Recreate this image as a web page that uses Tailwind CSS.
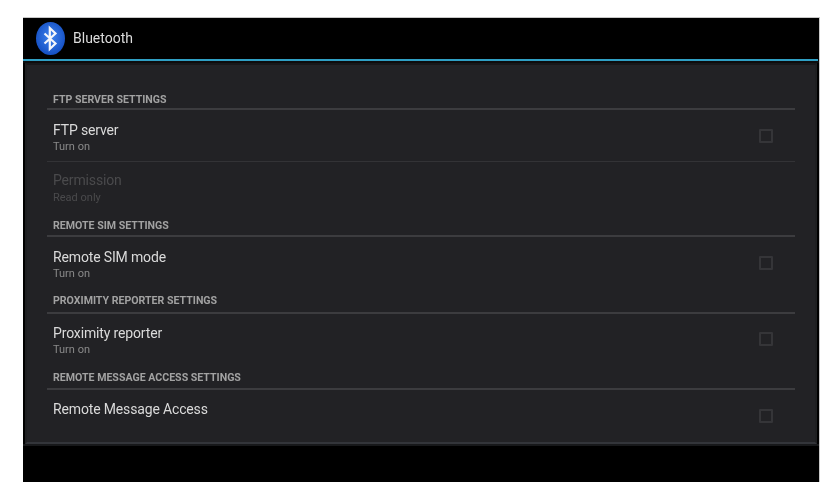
<!DOCTYPE html>
<html lang="en">
<head>
<meta charset="UTF-8">
<title>Bluetooth</title>
<script src="https://cdn.jsdelivr.net/npm/@tailwindcss/browser@4"></script>
</head>
<body class="bg-white font-['Roboto',sans-serif] w-[831px] h-[501px] overflow-hidden">
  <div class="ml-[23px] mt-[17px] w-[797px] h-[465px] flex flex-col bg-black border-t border-r border-[#c8c8c8] blur-[0.4px]">
    <!-- Action bar -->
    <header class="h-[41px] shrink-0 flex items-center pl-[13px] gap-[8px]">
      <svg class="w-[29px] h-[33px]" viewBox="0 0 29 33">
        <defs><radialGradient id="bt" cx="50%" cy="45%" r="55%"><stop offset="0%" stop-color="#3f83ee"/><stop offset="100%" stop-color="#1550c4"/></radialGradient></defs>
        <ellipse cx="14.5" cy="16.5" rx="14.5" ry="16.5" fill="url(#bt)"/>
        <path d="M8.5 11.5 L19.5 21.5 L13.8 27 V6 L19.5 11.5 L8.5 21.5" fill="none" stroke="#f4f6fb" stroke-width="2.2"/>
      </svg>
      <span class="text-[14px] text-[#dcdcdc]">Bluetooth</span>
    </header>
    <div class="h-[2px] shrink-0 bg-[#2f9fc4] mr-px"></div>
    <div class="h-[2px] shrink-0 bg-[#0d0d0e]"></div>
    <!-- Settings panel -->
    <main class="mx-[2px] h-[381px] shrink-0 bg-[#222225] border-2 border-[#18181a] border-b-[#33353a] border-l-[#1e1f21] border-r-[#1e1f21] px-[20px] pt-[26px]">
      <!-- FTP -->
      <h2 class="h-[17px] px-[6px] flex items-center text-[10.6px] font-bold text-[#a2a2a2]">FTP SERVER SETTINGS</h2>
      <div class="h-[2px] bg-[#3c3c3f]"></div>
      <div class="h-[51px] pl-[6px] pr-[22px] pt-[12px] flex items-start justify-between">
        <div>
          <p class="text-[14px] tracking-[-0.15px] leading-[17px] text-[#dadada]">FTP server</p>
          <p class="text-[11px] leading-[14px] mt-px text-[#8a8a8a]">Turn on</p>
        </div>
        <span class="w-[14px] h-[14px] mt-[7px] border-2 border-[#353538] rounded-[1px]"></span>
      </div>
      <div class="h-px bg-[#333336]"></div>
      <div class="h-[55px] pl-[6px] pt-[10px]">
        <p class="text-[14px] tracking-[-0.15px] leading-[17px] text-[#4a4a4c]">Permission</p>
        <p class="text-[11px] leading-[14px] mt-[2px] text-[#4a4a4c]">Read only</p>
      </div>
      <!-- Remote SIM -->
      <h2 class="h-[17px] px-[6px] flex items-center text-[10.6px] font-bold text-[#a2a2a2]">REMOTE SIM SETTINGS</h2>
      <div class="h-[2px] mt-[1px] bg-[#3c3c3f]"></div>
      <div class="h-[55px] pl-[6px] pr-[22px] pt-[12px] flex items-start justify-between">
        <div>
          <p class="text-[14px] tracking-[-0.15px] leading-[17px] text-[#dadada]">Remote SIM mode</p>
          <p class="text-[11px] leading-[14px] mt-px text-[#8a8a8a]">Turn on</p>
        </div>
        <span class="w-[14px] h-[14px] mt-[7px] border-2 border-[#353538] rounded-[1px]"></span>
      </div>
      <!-- Proximity -->
      <h2 class="h-[17px] px-[6px] flex items-center text-[10.6px] font-bold text-[#a2a2a2]">PROXIMITY REPORTER SETTINGS</h2>
      <div class="h-[2px] mt-[3px] bg-[#3c3c3f]"></div>
      <div class="h-[55px] pl-[6px] pr-[22px] pt-[11px] flex items-start justify-between">
        <div>
          <p class="text-[14px] tracking-[-0.15px] leading-[17px] text-[#dadada]">Proximity reporter</p>
          <p class="text-[11px] leading-[14px] mt-px text-[#8a8a8a]">Turn on</p>
        </div>
        <span class="w-[14px] h-[14px] mt-[7px] border-2 border-[#353538] rounded-[1px]"></span>
      </div>
      <!-- Remote message access -->
      <h2 class="h-[17px] px-[6px] flex items-center text-[10.6px] font-bold text-[#a2a2a2]">REMOTE MESSAGE ACCESS SETTINGS</h2>
      <div class="h-[2px] mt-[2px] bg-[#3c3c3f]"></div>
      <div class="pl-[6px] pr-[22px] pt-[11px] flex items-start justify-between">
        <p class="text-[14px] tracking-[-0.15px] leading-[17px] text-[#dadada]">Remote Message Access</p>
        <span class="w-[14px] h-[14px] mt-[8px] border-2 border-[#353538] rounded-[1px]"></span>
      </div>
    </main>
    <div class="h-[2px] shrink-0 bg-[#17181a]"></div>
    <footer class="flex-1 bg-black"></footer>
  </div>
</body>
</html>
